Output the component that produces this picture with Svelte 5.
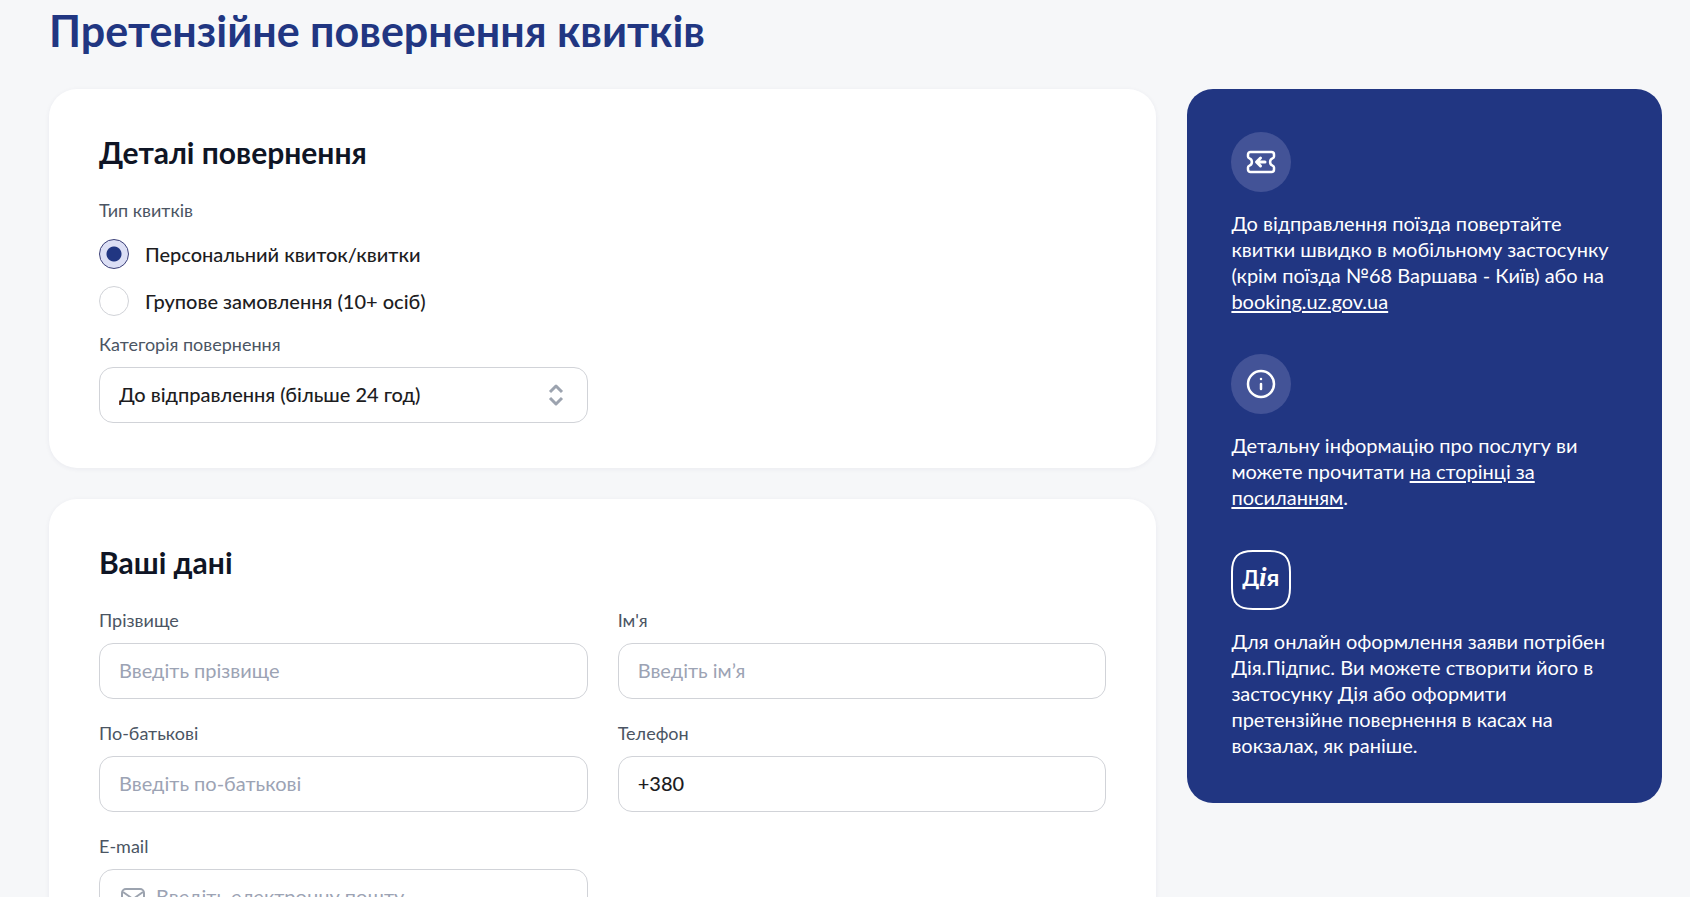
<script lang="ts">
	type TicketType = 'personal' | 'group';

	interface Field {
		id: string;
		label: string;
		placeholder: string;
		type: string;
		icon?: boolean;
	}

	const TICKET_TYPES: { id: TicketType; label: string }[] = [
		{ id: 'personal', label: 'Персональний квиток/квитки' },
		{ id: 'group', label: 'Групове замовлення (10+ осіб)' },
	];

	const CATEGORIES = ['До відправлення (більше 24 год)'];

	const FIELDS: Field[] = [
		{ id: 'surname', label: 'Прізвище', placeholder: 'Введіть прізвище', type: 'text' },
		{ id: 'name', label: "Ім'я", placeholder: 'Введіть ім’я', type: 'text' },
		{ id: 'patronymic', label: 'По-батькові', placeholder: 'Введіть по-батькові', type: 'text' },
		{ id: 'phone', label: 'Телефон', placeholder: '', type: 'tel' },
		{ id: 'email', label: 'E-mail', placeholder: 'Введіть електронну пошту', type: 'email', icon: true },
	];

	let ticketType = $state<TicketType>('personal');
	let category = $state(CATEGORIES[0]);
	let values = $state<Record<string, string>>({
		surname: '',
		name: '',
		patronymic: '',
		phone: '+380',
		email: '',
	});
</script>

<main class="page">
	<h1>Претензійне повернення квитків</h1>

	<div class="columns">
		<form class="form">
			<section class="card">
				<h2>Деталі повернення</h2>
				<fieldset class="types">
					<legend class="label">Тип квитків</legend>
					{#each TICKET_TYPES as t (t.id)}
						<label class="radio">
							<input type="radio" name="ticket-type" value={t.id} bind:group={ticketType} />
							<span>{t.label}</span>
						</label>
					{/each}
				</fieldset>
				<div class="grid">
					<div class="field">
						<label class="label" for="category">Категорія повернення</label>
						<div class="control">
							<select id="category" class="box" bind:value={category}>
								{#each CATEGORIES as c (c)}
									<option value={c}>{c}</option>
								{/each}
							</select>
							<svg class="chevrons" viewBox="0 0 16 22" aria-hidden="true">
								<path d="M2 8l6-6 6 6M2 14l6 6 6-6" />
							</svg>
						</div>
					</div>
				</div>
			</section>

			<section class="card">
				<h2>Ваші дані</h2>
				<div class="grid">
					{#each FIELDS as f (f.id)}
						<div class="field">
							<label class="label" for={f.id}>{f.label}</label>
							<div class="control">
								{#if f.icon}
									<svg class="mail" viewBox="0 0 24 20" aria-hidden="true">
										<rect x="1" y="1" width="22" height="18" rx="4" />
										<path d="M2 4l10 7 10-7" />
									</svg>
								{/if}
								<input
									id={f.id}
									class="box"
									class:with-icon={f.icon}
									type={f.type}
									placeholder={f.placeholder}
									bind:value={values[f.id]}
								/>
							</div>
						</div>
					{/each}
				</div>
			</section>
		</form>

		<aside class="info">
			<div class="tip">
				<span class="badge">
					<svg viewBox="0 0 30 30" aria-hidden="true">
						<path d="M4.5 5h21A2.5 2.5 0 0 1 28 7.5v2c0 1-.6 1.500-1.500 1.900a3.900 3.900 0 0 0 0 7.200c.9.4 1.500.9 1.500 1.900v2a2.500 2.500 0 0 1-2.500 2.500h-21A2.500 2.500 0 0 1 2 22.500v-2c0-1 .6-1.500 1.500-1.900a3.900 3.900 0 0 0 0-7.200C2.600 11 2 10.500 2 9.500v-2A2.500 2.500 0 0 1 4.500 5z" />
						<path class="arrow" d="M19 15h-8M14.500 11l-4 4 4 4" />
					</svg>
				</span>
				<p>
					До відправлення поїзда повертайте квитки швидко в мобільному застосунку (крім поїзда №68 Варшава - Київ) або на
					<a href="https://booking.uz.gov.ua">booking.uz.gov.ua</a>
				</p>
			</div>
			<div class="tip">
				<span class="badge">
					<svg viewBox="0 0 30 30" aria-hidden="true">
						<circle cx="15" cy="15" r="13" />
						<path d="M15 15v5M15 10v.1" />
					</svg>
				</span>
				<p>
					Детальну інформацію про послугу ви можете прочитати <a href="#service">на сторінці за посиланням</a>.
				</p>
			</div>
			<div class="tip">
				<svg class="diia" viewBox="0 0 60 60" role="img" aria-label="Дія">
					<path d="M22 1h16c15 0 21 6 21 21v16c0 15-6 21-21 21H22C7 59 1 53 1 38V22C1 7 7 1 22 1z" />
					<text x="30" y="36" text-anchor="middle">Д<tspan class="slant">і</tspan>я</text>
				</svg>
				<p>
					Для онлайн оформлення заяви потрібен Дія.Підпис. Ви можете створити його в застосунку Дія або оформити претензійне повернення в касах на вокзалах, як раніше.
				</p>
			</div>
		</aside>
	</div>
</main>

<style>
	:global(body) {
		margin: 0;
		background: #f6f7f9;
	}

	.page {
		padding: 3px 28px 31px 49px;
		font-family: Lato, 'Noto Sans', sans-serif;
		font-size: 20px;
		line-height: 26px;
		color: #1d1d1f;
	}

	h1 {
		margin: 0 0 30px;
		font-size: 43px;
		line-height: 56px;
		font-weight: 700;
		color: #213682;
	}

	h2 {
		margin: 0 0 28px;
		font-size: 30px;
		line-height: 36px;
		font-weight: 700;
		color: #0f1525;
	}

	.columns {
		display: grid;
		grid-template-columns: 7fr 3fr;
		align-items: start;
		gap: 31px;
	}

	.form {
		display: flex;
		flex-direction: column;
		gap: 31px;
	}

	.card {
		padding: 45px 50px;
		background: #fff;
		border-radius: 28px;
		box-shadow: 0 1px 5px rgba(30, 40, 80, 0.06);
	}

	.types {
		margin: 0 0 16px;
		padding: 0;
		border: 0;
	}

	.label {
		display: block;
		padding: 0;
		font-size: 18px;
		line-height: 24px;
		color: #4b5563;
	}

	.radio {
		display: flex;
		align-items: center;
		gap: 16px;
		height: 30px;
		margin: 17px 0 0;
		font-weight: 500;
	}

	.radio input {
		appearance: none;
		box-sizing: border-box;
		width: 30px;
		height: 30px;
		margin: 0;
		border: 1px solid #d1d3d8;
		border-radius: 50%;
		background: #fff;
	}

	.radio input:checked {
		border-color: #3b3f78;
		background: radial-gradient(circle, #213682 7px, #dcdff5 8px);
	}

	.grid {
		display: grid;
		grid-template-columns: 1fr 1fr;
		gap: 22px 30px;
	}

	.field {
		display: flex;
		flex-direction: column;
		gap: 11px;
		min-width: 0;
	}

	.control {
		position: relative;
	}

	.box {
		appearance: none;
		display: block;
		box-sizing: border-box;
		width: 100%;
		height: 56px;
		padding: 0 19px 2px;
		border: 1px solid #d1d3d8;
		border-radius: 14px;
		background: #fff;
		font: inherit;
		font-weight: 500;
		color: #1d1d1f;
	}

	.box::placeholder {
		color: #9ca3b4;
		font-weight: 400;
		opacity: 1;
	}

	.with-icon {
		padding-left: 56px;
	}

	.chevrons {
		position: absolute;
		top: 17px;
		right: 24px;
		width: 16px;
		height: 22px;
		pointer-events: none;
	}

	.mail {
		position: absolute;
		top: 19px;
		left: 22px;
		width: 24px;
		height: 20px;
	}

	.chevrons,
	.mail {
		fill: none;
		stroke: #9ca3af;
		stroke-width: 3;
		stroke-linejoin: round;
	}

	.mail {
		stroke-width: 2;
	}

	.info {
		display: flex;
		flex-direction: column;
		gap: 40px;
		padding: 43px 44px 45px;
		border-radius: 26px;
		background: #213682;
		color: #fff;
	}

	.tip {
		display: flex;
		flex-direction: column;
		gap: 18px;
	}

	.tip p {
		margin: 0;
	}

	.tip a {
		color: inherit;
		text-underline-offset: 2px;
	}

	.badge {
		display: flex;
		align-items: center;
		justify-content: center;
		width: 60px;
		height: 60px;
		border-radius: 50%;
		background: #435397;
	}

	.badge svg {
		width: 30px;
		height: 30px;
		fill: none;
		stroke: #fff;
		stroke-width: 2.5;
		stroke-linecap: round;
		stroke-linejoin: round;
	}

	.badge .arrow {
		stroke-width: 3;
	}

	.diia {
		width: 60px;
		height: 60px;
	}

	.diia path {
		fill: none;
		stroke: #fff;
		stroke-width: 2;
	}

	.diia text {
		fill: #fff;
		font-family: 'Noto Sans', sans-serif;
		font-size: 22px;
		font-weight: 600;
	}

	.diia .slant {
		font-family: 'Liberation Serif', serif;
		font-style: italic;
		font-size: 27px;
	}
</style>
